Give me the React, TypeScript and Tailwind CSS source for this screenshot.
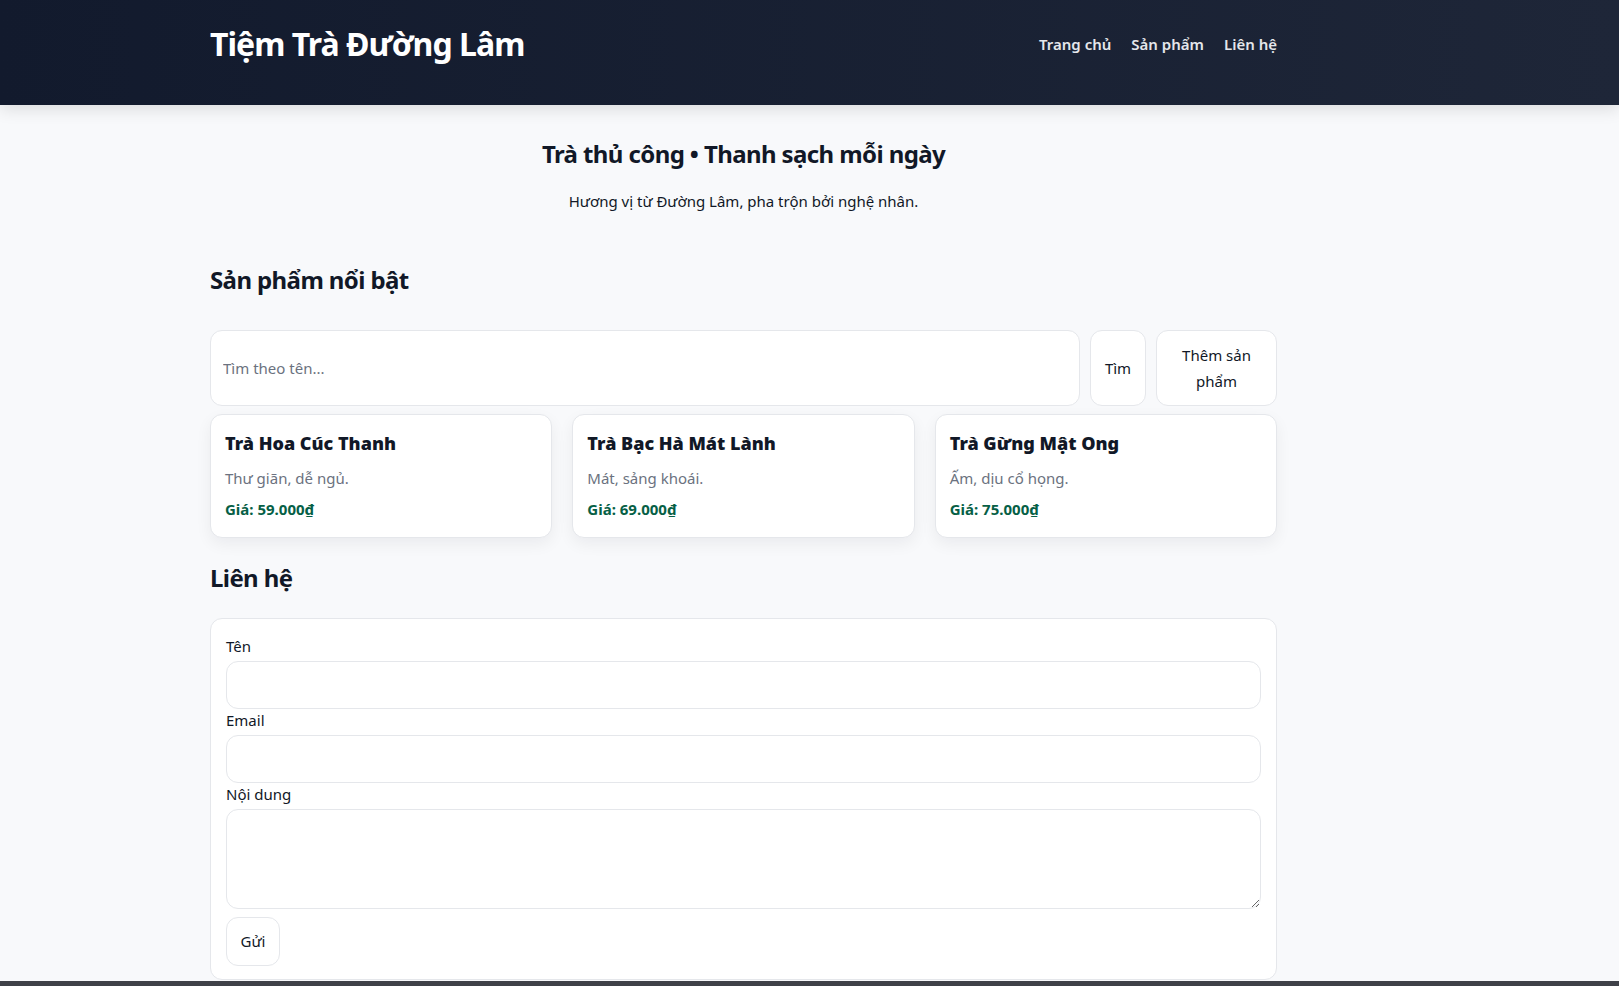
import React, { useState } from 'react';

const products = [
  { id: 1, name: 'Trà Hoa Cúc Thanh', desc: 'Thư giãn, dễ ngủ.', price: '59.000₫' },
  { id: 2, name: 'Trà Bạc Hà Mát Lành', desc: 'Mát, sảng khoái.', price: '69.000₫' },
  { id: 3, name: 'Trà Gừng Mật Ong', desc: 'Ấm, dịu cổ họng.', price: '75.000₫' },
];

export default function App() {
  const [query, setQuery] = useState('');

  const shown = products.filter(p => p.name.toLowerCase().includes(query.toLowerCase()));

  return (
    <div className="min-h-screen bg-[#f8f9fb] text-[#111827] font-['Noto_Sans',sans-serif]">
      {/* Header */}
      <header className="h-[105px] bg-gradient-to-r from-[#121a2d] to-[#1e2638] shadow-[0_4px_16px_rgba(0,0,0,0.12)]">
        <div className="ml-[210px] w-[1067px] h-[88px] flex items-center justify-between">
          <h1 className="text-[32px] leading-none font-bold tracking-[-0.03em] text-white">Tiệm Trà Đường Lâm</h1>
          <nav className="flex gap-5 text-[15px] font-semibold text-[#e5e7eb]">
            <a href="#">Trang chủ</a>
            <a href="#">Sản phẩm</a>
            <a href="#">Liên hệ</a>
          </nav>
        </div>
      </header>

      <main className="ml-[210px] w-[1067px]">
        {/* Hero */}
        <section className="pt-[33px] text-center">
          <h2 className="text-[24px] leading-8 font-bold tracking-[-0.025em]">Trà thủ công • Thanh sạch mỗi ngày</h2>
          <p className="mt-[20px] text-[15px] leading-[22px]">Hương vị từ Đường Lâm, pha trộn bởi nghệ nhân.</p>
        </section>

        {/* Products */}
        <section className="mt-[52px]">
          <h2 className="text-[24px] leading-8 font-bold tracking-[-0.025em]">Sản phẩm nổi bật</h2>
          <div className="mt-[34px] flex gap-[10px] items-stretch">
            <input
              value={query}
              onChange={e => setQuery(e.target.value)}
              placeholder="Tìm theo tên..."
              className="flex-1 rounded-xl border border-[#e5e7eb] bg-white px-3 text-[15px] outline-none placeholder:text-[#6b7280]"
            />
            <button className="w-[56px] rounded-xl border border-[#e5e7eb] bg-white text-[15px]">Tìm</button>
            <button className="w-[121px] rounded-xl border border-[#e5e7eb] bg-white px-4 py-[11px] text-[15px] leading-[26px]">
              Thêm sản phẩm
            </button>
          </div>

          <div className="mt-[8px] grid grid-cols-3 gap-5">
            {shown.map(p => (
              <div
                key={p.id}
                className="h-[124px] rounded-xl border border-[#e5e7eb] bg-white px-[14px] pt-[14px] shadow-[0_6px_16px_rgba(17,24,39,0.06)]"
              >
                <h3 className="text-[18px] leading-7 font-black">{p.name}</h3>
                <p className="mt-[10px] text-[15px] leading-[22px] text-[#6b7280]">{p.desc}</p>
                <p className="mt-[9px] text-[15px] leading-[22px] font-bold text-[#065f46]">Giá: {p.price}</p>
              </div>
            ))}
          </div>
        </section>

        {/* Contact */}
        <section className="mt-6">
          <h2 className="text-[24px] leading-8 font-bold tracking-[-0.025em]">Liên hệ</h2>
          <form
            onSubmit={e => e.preventDefault()}
            className="mt-[24px] rounded-xl border border-[#e5e7eb] bg-white px-[15px] pt-4 pb-[13px] flex flex-col"
          >
            <label className="text-[15px] leading-[22px]">Tên</label>
            <input className="mt-[4px] h-[48px] rounded-xl border border-[#e5e7eb] px-3 outline-none" />
            <label className="text-[15px] leading-[22px]">Email</label>
            <input type="email" className="mt-[4px] h-[48px] rounded-xl border border-[#e5e7eb] px-3 outline-none" />
            <label className="text-[15px] leading-[22px]">Nội dung</label>
            <textarea className="mt-[4px] h-[100px] rounded-xl border border-[#e5e7eb] px-3 outline-none" />
            <button type="submit" className="mt-2 h-[49px] w-[54px] rounded-xl border border-[#e5e7eb] bg-white text-[15px]">
              Gửi
            </button>
          </form>
        </section>
      </main>

      <footer className="mt-px h-[60px] bg-[#3f4148]" />
    </div>
  );
}
